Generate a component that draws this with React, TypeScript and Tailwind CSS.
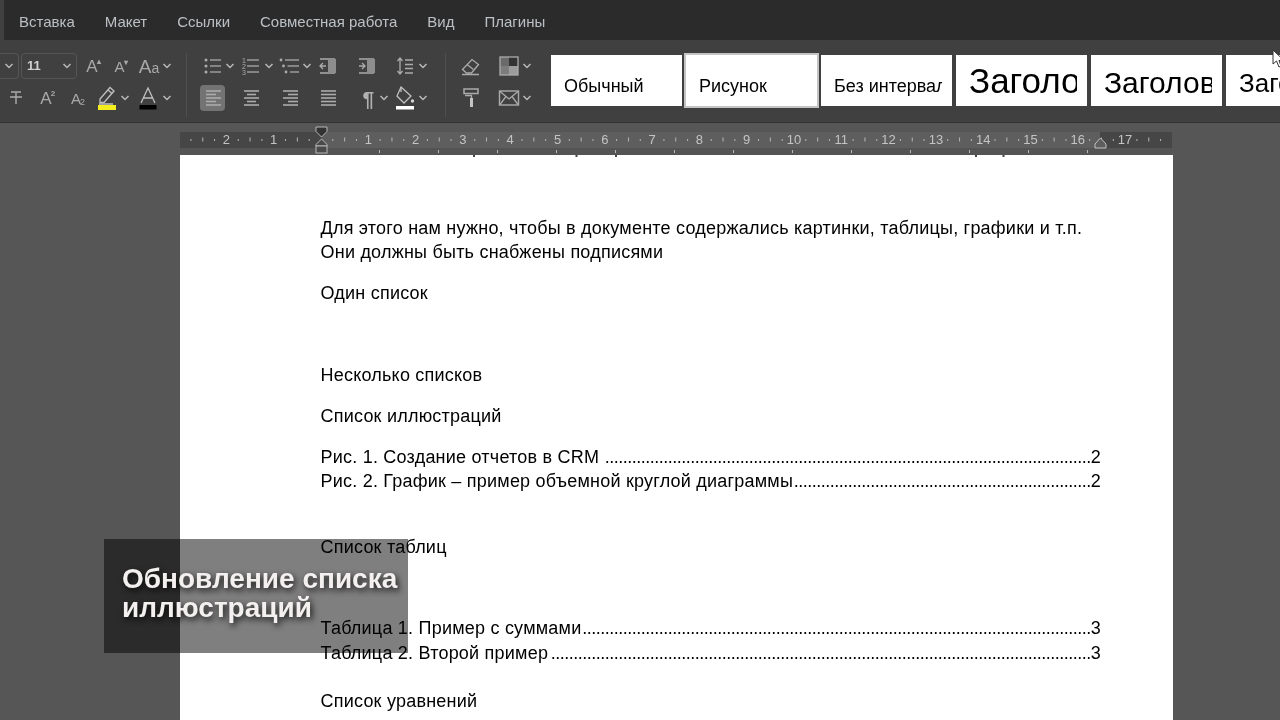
const sans = { fontFamily: '"Liberation Sans", Arial, sans-serif' };

const menu = ["Вставка", "Макет", "Ссылки", "Совместная работа", "Вид", "Плагины"];

function Chevron() {
  return (
    <svg width="10" height="8" viewBox="0 0 10 8" className="shrink-0">
      <path d="M1.5 2 L5 5.5 L8.5 2" fill="none" stroke="#b8b8b8" strokeWidth="1.5" />
    </svg>
  );
}

function Glyph({ children }: { children: React.ReactNode }) {
  return (
    <svg width="24" height="24" viewBox="0 0 24 24" fill="none" stroke="#ababab" strokeWidth="1.3" className="shrink-0">
      {children}
    </svg>
  );
}

// one toolbar slot: icon at the left, optional chevron after it
function Cell({ children, caret, active }: { children: React.ReactNode; caret?: boolean; active?: boolean }) {
  return (
    <div className="w-[38.6px] h-[26px] flex items-center">
      <div className={`w-[25px] h-[26px] flex items-center justify-center ${active ? "bg-[#737373] rounded-sm" : ""}`}>{children}</div>
      {caret && <Chevron />}
    </div>
  );
}

function Lines({ rows }: { rows: number[][] }) {
  return (
    <Glyph>
      {rows.map(([a, b], i) => (
        <path key={i} d={`M${a} ${5 + (i * 14) / (rows.length - 1)}H${b}`} strokeWidth="1.6" />
      ))}
    </Glyph>
  );
}

function Bullets() {
  return (
    <Glyph>
      {[6, 12, 18].map((y) => (
        <g key={y}>
          <circle cx="5" cy={y} r="1.5" fill="#ababab" stroke="none" />
          <path d={`M9 ${y}H20`} />
        </g>
      ))}
    </Glyph>
  );
}

function Numbered() {
  return (
    <Glyph>
      {[6, 12, 18].map((y, i) => (
        <g key={y}>
          <text x="3" y={y + 2.5} fontSize="7" fill="#ababab" stroke="none" style={sans}>{i + 1}</text>
          <path d={`M8 ${y}H20`} />
        </g>
      ))}
    </Glyph>
  );
}

function Multilevel() {
  return (
    <Glyph>
      {[[3, 6], [5.5, 12], [8, 18]].map(([x, y]) => (
        <g key={y}>
          <circle cx={x} cy={y} r="1.4" fill="#ababab" stroke="none" />
          <path d={`M${x + 4} ${y}H21`} />
        </g>
      ))}
    </Glyph>
  );
}

function Indent({ out }: { out?: boolean }) {
  return (
    <Glyph>
      <path d="M4 5H19M4 19H19" />
      <rect x="12" y="5" width="8" height="14" fill="#8d8d8d" stroke="none" />
      {out ? <path d="M10 12H4M7 9L4 12L7 15" /> : <path d="M4 12H10M7 9L10 12L7 15" />}
    </Glyph>
  );
}

function LineSpacing() {
  return (
    <Glyph>
      <path d="M7 4V20M4.5 7L7 4L9.5 7M4.5 17L7 20L9.5 17" />
      <path d="M12 6H20M12 10.5H20M12 14.5H20M12 19H20" />
    </Glyph>
  );
}

function Eraser() {
  return (
    <Glyph>
      <path d="M3.5 15.5L13 5.5L19.5 10.5L12.5 19H7.5Z" />
      <path d="M8 10.5L14.5 15.5M3 20.5H20" />
    </Glyph>
  );
}

function Shading() {
  return (
    <Glyph>
      <rect x="3" y="3" width="9" height="9" fill="#6a6a6a" stroke="none" />
      <rect x="12" y="3" width="9" height="9" fill="#333" stroke="none" />
      <rect x="3" y="12" width="9" height="9" fill="#7c7c7c" stroke="none" />
      <rect x="12" y="12" width="9" height="9" fill="#9c9c9c" stroke="none" />
      <rect x="3" y="3" width="18" height="18" />
    </Glyph>
  );
}

function Roller() {
  return (
    <Glyph>
      <path d="M5 3H19V7.5H5Z" fill="#3f3f3f" strokeWidth="1.5" />
      <path d="M6 9.5H12.5V12" />
      <rect x="11" y="12" width="3" height="9" fill="#c4c4c4" stroke="none" />
    </Glyph>
  );
}

function Envelope() {
  return (
    <Glyph>
      <rect x="2.5" y="5" width="19" height="14" strokeWidth="1.4" />
      <path d="M3 5.5L12 13L21 5.5M3 18.5L9 10.5M21 18.5L15 10.5" />
    </Glyph>
  );
}

function Fill() {
  return (
    <svg width="24" height="26" viewBox="0 0 24 26" fill="none" stroke="#c0c0c0" strokeWidth="1.3">
      <path d="M8 2L18 11L11 18L4 11Z" />
      <path d="M8 2V7" />
      <circle cx="19.5" cy="16" r="1.7" fill="#d4d4d4" stroke="none" />
      <rect x="3" y="21" width="18" height="3.5" fill="#fff" stroke="none" />
    </svg>
  );
}

function Highlighter() {
  return (
    <svg width="24" height="26" viewBox="0 0 24 26" fill="none" stroke="#c0c0c0" strokeWidth="1.3">
      <path d="M5 14L15 2.5L19 6L9 17.5H5Z" />
      <path d="M13 5L17 8.5M4 19H18" />
      <rect x="3" y="20" width="18" height="5" fill="#f5ee1f" stroke="none" />
    </svg>
  );
}

function FontColor() {
  return (
    <svg width="24" height="26" viewBox="0 0 24 26" fill="none" stroke="#c0c0c0" strokeWidth="1.3">
      <path d="M5 18L12 3L19 18M7.5 13H16.5" />
      <rect x="3.5" y="20" width="17" height="4.5" fill="#000" stroke="none" />
    </svg>
  );
}

function Letter({ size, mark, sub }: { size: number; mark?: string; sub?: string }) {
  return (
    <span className="relative text-[#a8a8a8] leading-none" style={{ ...sans, fontSize: size }}>
      A
      {mark && <span className="absolute left-full top-0 text-[8px] font-bold ml-[-1px]">{mark}</span>}
      {sub && <span className="absolute left-full bottom-[-1px] text-[9px] ml-[-1px]">{sub}</span>}
    </span>
  );
}

function Slot({ w, children }: { w: string; children: React.ReactNode }) {
  return <div className={`${w} h-[26px] flex items-center justify-center shrink-0`}>{children}</div>;
}

function FontGroup() {
  return (
    <div className="w-[187px] h-[64px] flex flex-col gap-[6px] border-r border-[#505050] shrink-0">
      <div className="flex items-center h-[26px]">
        <div className="w-[19px] h-[26px] flex items-center justify-center border border-l-0 border-[#555] rounded-r-sm">
          <Chevron />
        </div>
        <div className="ml-[2px] w-[56px] h-[26px] pl-[5px] pr-[4px] flex items-center justify-between border border-[#555] rounded-sm">
          <span className="text-[13px] font-bold text-[#d0d0d0]" style={sans}>11</span>
          <Chevron />
        </div>
        <Slot w="w-[28px] ml-[1px]"><Letter size={17} mark="▴" /></Slot>
        <Slot w="w-[27px]"><Letter size={15} mark="▾" /></Slot>
        <Slot w="w-[26px] ml-[3px]">
          <span className="text-[19px] text-[#a8a8a8] leading-none whitespace-nowrap" style={sans}>
            A<span className="text-[14px]">a</span>
          </span>
        </Slot>
        <Chevron />
      </div>
      <div className="flex items-center h-[26px]">
        <Slot w="w-[32px]">
          <svg width="16" height="18" viewBox="0 0 16 18" fill="none" stroke="#ababab" strokeWidth="1.4">
            <path d="M3 3H13M8 3V15M2 8H14" />
          </svg>
        </Slot>
        <Slot w="w-[28px]"><Letter size={17} mark="2" /></Slot>
        <Slot w="w-[32px]"><Letter size={15} sub="2" /></Slot>
        <Slot w="w-[26px] ml-[2px]"><Highlighter /></Slot>
        <Chevron />
        <Slot w="w-[28px] ml-[4px]"><FontColor /></Slot>
        <Chevron />
      </div>
    </div>
  );
}

function ParaGroup() {
  return (
    <div className="w-[259px] h-[64px] pl-[13px] flex flex-col gap-[6px] border-r border-[#505050] shrink-0">
      <div className="flex">
        <Cell caret><Bullets /></Cell>
        <Cell caret><Numbered /></Cell>
        <Cell caret><Multilevel /></Cell>
        <Cell><Indent out /></Cell>
        <Cell><Indent /></Cell>
        <Cell caret><LineSpacing /></Cell>
      </div>
      <div className="flex">
        <Cell active><Lines rows={[[5, 20], [5, 15], [5, 20], [5, 15], [5, 20]]} /></Cell>
        <Cell><Lines rows={[[5, 20], [8, 17], [5, 20], [8, 17], [5, 20]]} /></Cell>
        <Cell><Lines rows={[[5, 20], [10, 20], [5, 20], [10, 20], [5, 20]]} /></Cell>
        <Cell><Lines rows={[[5, 20], [5, 20], [5, 20], [5, 20], [5, 20]]} /></Cell>
        <Cell caret>
          <span className="ml-[3px] text-[21px] font-bold text-[#b0b0b0] leading-none" style={sans}>¶</span>
        </Cell>
        <Cell caret><Fill /></Cell>
      </div>
    </div>
  );
}

function MiscGroup() {
  return (
    <div className="h-[64px] w-[89px] pl-[12px] flex flex-col gap-[6px] shrink-0">
      <div className="flex">
        <Cell><Eraser /></Cell>
        <Cell caret><Shading /></Cell>
      </div>
      <div className="flex">
        <Cell><Roller /></Cell>
        <Cell caret><Envelope /></Cell>
      </div>
    </div>
  );
}

function StyleTile({ label, cls, active }: { label: string; cls: string; active?: boolean }) {
  return (
    <div
      className={`w-[131px] h-[51px] bg-white shrink-0 pl-[13px] pr-[10px] text-black ${active ? "outline-2 outline-[#c4c4c4]" : ""}`}
      style={sans}
    >
      <div className={`h-full overflow-hidden whitespace-nowrap ${cls}`}>{label}</div>
    </div>
  );
}

function Ruler() {
  const origin = 141;
  const cm = 47.3;
  const nums: number[] = [];
  for (let i = -2; i <= 17; i++) if (i !== 0) nums.push(i);
  const ticks: { x: number; big: boolean }[] = [];
  for (let i = -3; i <= 18; i++) {
    [0.25, 0.5, 0.75].forEach((f) => {
      const x = origin + (i + f) * cm;
      if (x > 4 && x < 988) ticks.push({ x, big: f === 0.5 });
    });
  }
  const tabs: number[] = [];
  for (let x = 199; x <= 908; x += 59) tabs.push(x);
  return (
    <svg width="992" height="25" viewBox="0 0 992 25" className="block shrink-0 overflow-visible">
      <rect x="0" y="2" width="992" height="16" fill="#464646" />
      <rect x="141" y="2" width="779" height="16" fill="#5e5e5e" />
      <rect x="0" y="18" width="992" height="7" fill="#545454" />
      {ticks.map((t) => (
        <rect key={t.x} x={t.x - 0.5} y={t.big ? 7.5 : 9} width="1" height={t.big ? 4 : 2} fill="#b5b5b5" />
      ))}
      {nums.map((n) => (
        <text key={n} x={origin + n * cm} y="14" textAnchor="middle" fontSize="13" fill="#c4c4c4" style={sans}>
          {Math.abs(n)}
        </text>
      ))}
      {tabs.map((x) => (
        <rect key={x} x={x} y="20" width="1" height="3" fill="#b8b8b8" />
      ))}
      <path d="M136 -3H147V1.5L141.5 7L136 1.5Z" fill="#333" stroke="#b8b8b8" />
      <path d="M141.5 9L147 14.5V16H136V14.5Z" fill="#4a4a4a" stroke="#b8b8b8" />
      <rect x="136" y="16" width="11" height="7" fill="#4a4a4a" stroke="#b8b8b8" />
      <path d="M920.5 8L926 14V18H915V14Z" fill="#5e5e5e" stroke="#c0c0c0" />
    </svg>
  );
}

function TocRow({ title, page, dots }: { title: string; page: number; dots: number }) {
  return (
    <div className="flex h-[24px] items-center">
      <span className="whitespace-nowrap shrink-0">{title}</span>
      <span className="flex-1 text-right whitespace-nowrap tracking-[-0.5px]">{".".repeat(dots)}</span>
      <span className="shrink-0">{page}</span>
    </div>
  );
}

function Para({ children, mt }: { children: React.ReactNode; mt: string }) {
  return <p className={`${mt} h-[24px] leading-[24px] whitespace-nowrap`}>{children}</p>;
}

export default function App() {
  return (
    <div className="relative w-[1280px] h-[720px] overflow-hidden flex flex-col bg-[#565656] blur-[0.3px]">
      <div className="h-[40px] bg-[#2b2b2b] flex shrink-0 text-[15px] text-[#bcc0c4]" style={sans}>
        <div className="w-[4px] bg-[#404040]" />
        <div className="ml-[15px] flex gap-[30px] pt-[13px] leading-[18px]">
          {menu.map((m) => (
            <span key={m}>{m}</span>
          ))}
        </div>
      </div>

      <div className="relative h-[83px] bg-[#404040] border-b border-[#333] flex items-start pt-[13px] shrink-0">
        <FontGroup />
        <ParaGroup />
        <MiscGroup />
        <div className="flex gap-[4px] ml-[16px] mt-[2px]">
          <StyleTile label="Обычный" cls="text-[18px] pt-[18px]" />
          <StyleTile label="Рисунок" cls="text-[18px] pt-[18px]" active />
          <StyleTile label="Без интервала" cls="text-[18px] pt-[18px]" />
          <StyleTile label="Заголовок 1" cls="text-[35px] pt-0" />
          <StyleTile label="Заголовок 2" cls="text-[30px] pt-[5px]" />
          <StyleTile label="Заголовок 3" cls="text-[26px] pt-[9px]" />
        </div>
        <svg width="9" height="20" viewBox="0 0 9 20" className="absolute left-[1272px] top-[9px]">
          <path d="M1 1V15L4.5 12L7 18L9 17L7 11.5H12Z" fill="#fff" stroke="#333" strokeWidth="1" />
        </svg>
      </div>

      <div className="flex-1 min-h-0 pl-[180px] pt-[7px]">
        <Ruler />
        <div className="w-[993px] h-[570px] bg-white pl-[140.5px] pr-[72px] text-[18px] tracking-[0.22px] text-black" style={sans}>
          <svg width="993" height="2" viewBox="0 0 993 2" className="block -ml-[140.5px]">
            {[293, 395.5, 435, 795, 822.5].map((x) => (
              <rect key={x} x={x} y="0" width="2" height="2" fill="#444" />
            ))}
          </svg>
          <Para mt="mt-[59px]">Для этого нам нужно, чтобы в документе содержались картинки, таблицы, графики и т.п.</Para>
          <Para mt="mt-0">Они должны быть снабжены подписями</Para>
          <Para mt="mt-[17px]">Один список</Para>
          <Para mt="mt-[58px]">Несколько списков</Para>
          <Para mt="mt-[17px]">Список иллюстраций</Para>
          <div className="mt-[17px]">
            <TocRow title="Рис. 1. Создание отчетов в CRM" page={2} dots={108} />
            <TocRow title="Рис. 2. График – пример объемной круглой диаграммы" page={2} dots={66} />
          </div>
          <Para mt="mt-[42px]">Список таблиц</Para>
          <div className="mt-[57px]">
            <TocRow title="Таблица 1. Пример с суммами" page={3} dots={113} />
            <div className="mt-px">
              <TocRow title="Таблица 2. Второй пример" page={3} dots={120} />
            </div>
          </div>
          <Para mt="mt-[24px]">Список уравнений</Para>
        </div>
      </div>

      <div className="absolute left-[104px] top-[539px] w-[304px] h-[114px] bg-black/50 pl-[18px] pt-[25px]">
        <p className="text-[28px] leading-[29px] font-bold text-[#f4f0f0] [text-shadow:2px_3px_6px_rgba(0,0,0,0.85)]" style={sans}>
          Обновление списка
          <br />
          иллюстраций
        </p>
      </div>
    </div>
  );
}
